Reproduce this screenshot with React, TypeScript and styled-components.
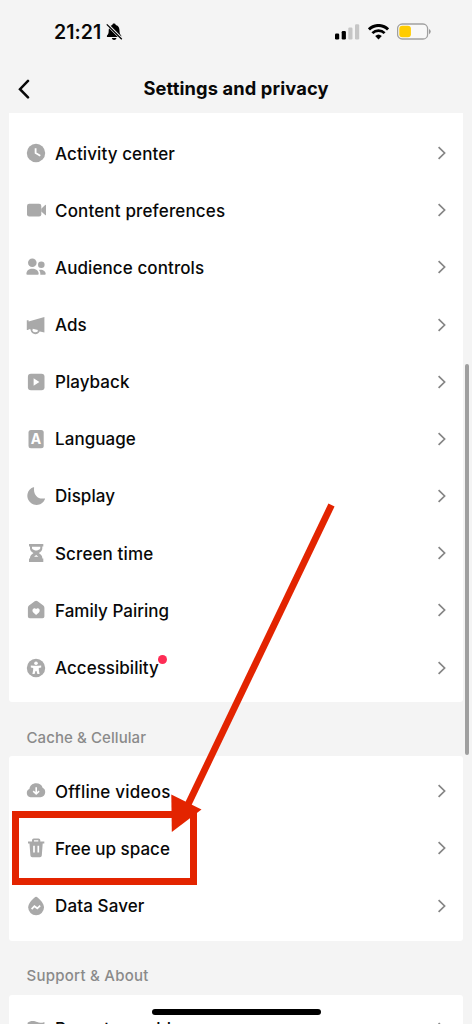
import React from "react";
import styled, { createGlobalStyle } from "styled-components";

const GlobalStyle = createGlobalStyle`
  * { box-sizing: border-box; }
  html, body { margin: 0; padding: 0; background: #f4f4f4; }
  body { font-family: Inter, "Liberation Sans", sans-serif; color: #080808; overflow: hidden; }
`;

const Screen = styled.main`
  position: relative;
  width: 472px;
  height: 1024px;
  overflow: hidden;
  background: #f4f4f4;
`;

const StatusBar = styled.header`
  height: 64px;
  display: flex;
  align-items: center;
  justify-content: space-between;
  padding: 0 41px 0 54px;
`;

const StatusGroup = styled.div<{ $gap: number }>`
  display: flex;
  align-items: center;
  gap: ${(p) => p.$gap}px;
`;

const Time = styled.span`
  font-size: 19.5px;
  line-height: 24px;
  font-weight: 600;
  letter-spacing: 0.05px;
`;

const NavBar = styled.nav`
  height: 49px;
  display: grid;
  grid-template-columns: 48px 1fr 48px;
  align-items: center;
`;

const BackButton = styled.button`
  border: 0;
  padding: 0 0 0 16px;
  background: none;
  display: flex;
`;

const Title = styled.h1`
  margin: 0;
  padding-bottom: 1.5px;
  text-align: center;
  font-size: 18.3px;
  line-height: 24px;
  font-weight: 700;
  white-space: nowrap;
  letter-spacing: 0.12px;
`;

const Card = styled.section<{ $first?: boolean; $top?: number }>`
  margin: 0 9px;
  padding: ${(p) => (p.$first ? "11.6px 0 6px" : `${p.$top ?? 6.6}px 0 6.9px`)};
  background: #fff;
  border-radius: ${(p) => (p.$first ? "0 0 3px 3px" : "3px")};
`;

const Row = styled.div`
  height: 57.17px;
  display: flex;
  align-items: center;
  padding: 0 15px;
`;

const RowIcon = styled.svg`
  width: 24px;
  height: 24px;
  flex: none;
  margin-right: 7px;
  overflow: visible;
  fill: #a9a9a9;
`;

const Label = styled.span<{ $tracking: number }>`
  position: relative;
  padding-top: 0.7px;
  font-size: 17px;
  line-height: 24px;
  font-weight: 500;
  white-space: nowrap;
  letter-spacing: ${(p) => p.$tracking}px;
`;

const Dot = styled.i`
  position: absolute;
  left: calc(100% - 0.5px);
  top: 0;
  width: 9px;
  height: 9px;
  border-radius: 50%;
  background: #fe2c55;
`;

const Chevron = styled.svg`
  width: 10px;
  height: 14px;
  margin-left: auto;
  margin-right: 1.5px;
  flex: none;
`;

const SectionTitle = styled.h2<{ $tracking: number; $top?: number }>`
  margin: 0;
  height: 54px;
  padding: ${(p) => p.$top ?? 23.5}px 26px 0 26.5px;
  font-size: 15px;
  line-height: 24px;
  font-weight: 500;
  color: #8a8a8a;
  letter-spacing: ${(p) => p.$tracking}px;
`;

const ScrollThumb = styled.div`
  position: absolute;
  left: 465px;
  top: 363.5px;
  width: 4px;
  height: 391.5px;
  border-radius: 2px;
  background: #9f9f9f;
`;

const HomeIndicator = styled.div`
  position: absolute;
  left: 151.5px;
  top: 1009.3px;
  width: 169px;
  height: 6px;
  border-radius: 3px;
  background: #000;
`;

const Highlight = styled.div`
  position: absolute;
  left: 12px;
  top: 811px;
  width: 185px;
  height: 74px;
  border: 7px solid #e32400;
`;

const Arrow = styled.svg`
  position: absolute;
  left: 160px;
  top: 495px;
  width: 185px;
  height: 345px;
`;

const LetterA = styled.text`
  font: 700 14px Inter, sans-serif;
  fill: #fff;
  text-anchor: middle;
`;

const icons: Record<string, React.ReactNode> = {
  clock: (
    <>
      <circle r="9.2" />
      <path d="M-.4-4.7V.1L4.3 2.8" fill="none" stroke="#fff" strokeWidth="1.8" />
    </>
  ),
  video: (
    <>
      <rect x="-9" y="-6.3" width="14.3" height="12.8" rx="2.2" />
      <path d="M5.2-1.2 9.2-4.9Q10-5.6 10-4.5V4.7Q10 5.8 9.2 5.1L5.2 1.4Z" />
    </>
  ),
  people: (
    <>
      <circle cx="-3.7" cy="-4.2" r="4.3" />
      <path d="M-9.6 7C-9.6 3.5-7 1.7-3.7 1.7S2.7 3.5 2.7 7Q2.7 7.8 1.7 7.8H-8.6Q-9.6 7.8-9.6 7Z" />
      <circle cx="5.3" cy="-2.3" r="3.3" />
      <path d="M3 3C6.5 2.3 9.7 4 9.7 7.1Q9.7 7.8 8.8 7.8H4.3C4.5 6 4.1 4.4 3 3Z" />
    </>
  ),
  ads: (
    <>
      <path d="M-9.2-4.8H-7.4V-3.5L8.4-8.1V7.6L-7.4 3.9V5.1H-9.2Z" />
      <path d="M-4.4 3.6A3.7 3.7 0 0 0 3 5.2" fill="none" stroke="#a9a9a9" strokeWidth="1.9" />
      <path d="M-3.3 3.8 2 4.9A2.7 2.7 0 0 1-3.3 3.8Z" fill="#fff" />
    </>
  ),
  play: (
    <>
      <rect x="-8.1" y="-8.3" width="16.6" height="16.6" rx="3" />
      <path d="M-2.4-3.8 3.4 0-2.4 3.8Z" fill="#fff" />
    </>
  ),
  language: (
    <>
      <rect x="-7.5" y="-9" width="15.2" height="18.2" rx="2.5" />
      <LetterA x="0" y="5">A</LetterA>
    </>
  ),
  moon: <path d="M-2.8-8.7Q-1.7-9.2-1.9-7.9C-2.8-1.5 2 3.6 8 2.4Q9.3 2.2 8.8 3.4A9.1 9.1 0 1 1-2.8-8.7Z" />,
  hourglass: (
    <>
      <path d="M-7-9H7.3V-6.5H6.3V-4.6C6.3-2.3 4.4-1.3 2.8.1 4.4 1.5 6.3 2.5 6.3 4.8V5.5H7.3V9H-7V5.5H-6V4.8C-6 2.5-4.1 1.5-2.5.1-4.1-1.3-6-2.3-6-4.6V-6.5H-7Z" />
      <path d="M-4-6.2H4.3V-5C4.3-3.4 2.6-3.2 1.1-2.6H-.8C-2.3-3.2-4-3.4-4-5ZM.2 1.9 2.4 3.7H-2Z" fill="#fff" />
    </>
  ),
  house: (
    <>
      <path d="M-1.3-8.7Q.2-9.7 1.6-8.7L7.3-4.4Q8.4-3.6 8.4-2.2V6.5Q8.4 8.3 6.6 8.3H-6.3Q-8.1 8.3-8.1 6.5V-2.2Q-8.1-3.6-7-4.4Z" />
      <path d="M.1 5.1-2.7 2.4C-5-.1-1.8-3.3.1-.9 2-3.3 5.2-.1 2.9 2.4Z" fill="#fff" />
    </>
  ),
  access: (
    <>
      <circle r="9.2" />
      <circle cy="-4.8" r="1.8" fill="#fff" />
      <path d="M-5.2-2.6-1.6-2.2H1.6L5.2-2.6V-.5L2.8 0V1.7L3.6 6H1.4L.5 3H-.5L-1.4 6H-3.6L-2.8 1.7V0L-5.2-.5Z" fill="#fff" />
    </>
  ),
  cloud: (
    <>
      <path d="M-5.5 6.2C-7.7 6.2-9.2 4.4-9.2 2.1-9.2-.2-7.9-1.5-6.6-2-6.1-5.7-3.1-7.8 0-7.8 3.4-7.8 5.9-6.2 6.6-3.2 8.2-2.6 9.2-1 9.2 1.1 9.2 4.2 7.1 6.2 4.4 6.2Z" />
      <path d="M.2-3.8V2.8M-2.8 .2.2 3 3.1.2" fill="none" stroke="#fff" strokeWidth="1.6" />
    </>
  ),
  trash: (
    <>
      <path d="M-4-6V-7.8Q-4-9.6-2.2-9.6H2.5Q4.3-9.6 4.3-7.8V-6H2.3V-7.7H-2V-6Z" />
      <path d="M-8-6.6H8.3V-4.4H6.7L5.8 7.4Q5.6 9.2 4 9.2H-3.8Q-5.4 9.2-5.6 7.4L-6.5-4.4H-8Z" />
      <path d="M-2-2.3V4.6M2.3-2.3V4.6" fill="none" stroke="#fff" strokeWidth="1.7" />
    </>
  ),
  drop: (
    <>
      <path d="M-.8-9Q.1-9.7 1-9C4.9-5.9 8-2.2 8 1.6A7.9 7.7 0 0 1-7.8 1.6C-7.8-2.2-4.7-5.9-.8-9Z" />
      <path d="M-4.4 3.1-1.6.2 1.3 2.3 4.2-.4" fill="none" stroke="#fff" strokeWidth="1.7" />
    </>
  ),
  flag: <path d="M-8.4-6.2C-5.5-8.8-1.5-8.3 1.2-6.9 3.4-5.8 5.7-5.9 8.4-7.1V5C4 8-1 4-6 6V9H-8.4Z" />,
};

type Item = { icon: string; text: string; tracking?: number; dot?: boolean };

const general: Item[] = [
  { icon: "clock", text: "Activity center", tracking: 0.1 },
  { icon: "video", text: "Content preferences", tracking: 0.16 },
  { icon: "people", text: "Audience controls", tracking: 0.09 },
  { icon: "ads", text: "Ads" },
  { icon: "play", text: "Playback", tracking: 0.05 },
  { icon: "language", text: "Language", tracking: 0.06 },
  { icon: "moon", text: "Display", tracking: 0.05 },
  { icon: "hourglass", text: "Screen time", tracking: 0.12 },
  { icon: "house", text: "Family Pairing" },
  { icon: "access", text: "Accessibility", tracking: 0.03, dot: true },
];

const cache: Item[] = [
  { icon: "cloud", text: "Offline videos", tracking: 0.22 },
  { icon: "trash", text: "Free up space" },
  { icon: "drop", text: "Data Saver", tracking: 0.12 },
];

const support: Item[] = [{ icon: "flag", text: "Report a problem", tracking: 0.1 }];

function Rows({ items }: { items: Item[] }) {
  return (
    <>
      {items.map((it) => (
        <Row key={it.text}>
          <RowIcon viewBox="-12 -12 24 24">{icons[it.icon]}</RowIcon>
          <Label $tracking={it.tracking ?? 0}>
            {it.text}
            {it.dot && <Dot />}
          </Label>
          <Chevron viewBox="0 0 10 14">
            <path d="M1.6 1.2 7.6 7 1.6 12.8" fill="none" stroke="#858585" strokeWidth="1.7" />
          </Chevron>
        </Row>
      ))}
    </>
  );
}

export default function App() {
  return (
    <Screen>
      <GlobalStyle />
      <StatusBar>
        <StatusGroup $gap={5}>
          <Time>21:21</Time>
          <svg width="17" height="18" viewBox="0 0 17 18">
            <path d="M8 .6Q9.5.6 9.8 2C12.5 2.8 13.5 5 13.5 7.4 13.5 10.2 14 11 15 12.2 15.8 13.3 15.2 14 14.4 14H1.8C.9 14 .5 13.2 1.2 12.2 2.3 11 2.7 10.2 2.7 7.4 2.7 5 3.8 2.8 6.3 2 6.6 1 7.1.6 8 .6ZM5.8 15H10.5C10 17.5 6.3 17.5 5.8 15Z" />
            <path d="M1 1.2 15.8 16" stroke="#f4f4f4" strokeWidth="3" />
            <path d="M.8 1.4 15.8 16.3" stroke="#000" strokeWidth="1.3" />
          </svg>
        </StatusGroup>
        <StatusGroup $gap={8}>
          <svg width="25" height="17" viewBox="0 0 25 17">
            <rect x="0" y="9.5" width="4.2" height="6" rx="1.2" />
            <rect x="6.7" y="7.1" width="4.2" height="8.4" rx="1.2" />
            <rect x="13.3" y="3.5" width="4.2" height="12" rx="1.2" fill="#c6c6c6" />
            <rect x="20" y=".3" width="4.2" height="15.2" rx="1.2" fill="#c6c6c6" />
          </svg>
          <svg width="21" height="16" viewBox="0 0 21 16">
            <path d="M.9 5.5A13.4 13.4 0 0 1 20.1 5.5" fill="none" stroke="#000" strokeWidth="3" />
            <path d="M4.4 9.1A8.6 8.6 0 0 1 16.6 9.1" fill="none" stroke="#000" strokeWidth="2.7" />
            <path d="M7.2 12.1A4.8 4.8 0 0 1 13.8 12.1L10.5 15.4Z" />
          </svg>
          <svg width="34" height="18" viewBox="0 0 34 18">
            <rect x=".6" y="1" width="30" height="15" rx="4.6" fill="#f8f8f8" stroke="#a0a0a0" strokeWidth="1.3" />
            <rect x="2.3" y="2.8" width="11.6" height="11.4" rx="3" fill="#ffcc00" />
            <path d="M32 6V11.2Q33.7 10.3 33.7 8.6T32 6Z" fill="#999" />
          </svg>
        </StatusGroup>
      </StatusBar>
      <NavBar>
        <BackButton aria-label="Back">
          <svg width="16" height="20" viewBox="0 0 16 20">
            <path d="M12 1.9 4 10.2 12 18.4" fill="none" stroke="#080808" strokeWidth="2.5" strokeLinecap="round" />
          </svg>
        </BackButton>
        <Title>Settings and privacy</Title>
      </NavBar>
      <Card $first>
        <Rows items={general} />
      </Card>
      <SectionTitle $tracking={0.08}>Cache &amp; Cellular</SectionTitle>
      <Card>
        <Rows items={cache} />
      </Card>
      <SectionTitle $tracking={0.25} $top={22.8}>Support &amp; About</SectionTitle>
      <Card $top={5.2}>
        <Rows items={support} />
      </Card>
      <ScrollThumb />
      <HomeIndicator />
      <Highlight />
      <Arrow viewBox="160 495 185 345">
        <path d="M331.5 505 183 815" stroke="#e32400" strokeWidth="6.8" />
        <path d="M171.3 794.5 201.5 809.5 171.8 832Z" fill="#e32400" />
      </Arrow>
    </Screen>
  );
}
